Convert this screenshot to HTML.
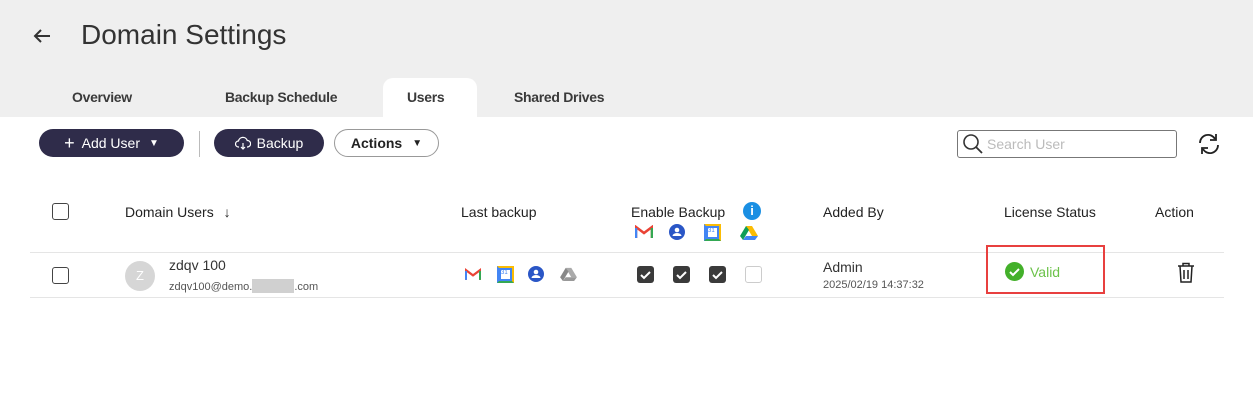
<!DOCTYPE html>
<html><head><style>
*{box-sizing:border-box;margin:0;padding:0}
body{width:1253px;height:420px;background:#fff;font-family:"Liberation Sans",sans-serif;color:#222;position:relative;overflow:hidden}
.abs{position:absolute}
.hdr{left:0;top:0;width:1253px;height:117px;background:#efefef}
.t{font-size:14px;font-weight:bold;color:#3a3a3a;letter-spacing:-0.3px}
.btn{height:28px;border-radius:14px;display:flex;align-items:center;justify-content:center;font-size:14px}
.dark{background:#2f2c4a;color:#fff}
.cb{width:17px;height:17px;border:1.5px solid #444;border-radius:3px}
.ck{width:17px;height:17px;border-radius:3px;background:#3a3a3a}
.line{height:1px;background:#e5e5e5;left:30px;width:1194px}
.hd{font-size:14px;color:#222}
.pers{border-radius:50%;background:#2a56c6;overflow:hidden}
</style></head><body>
<div class="abs hdr"></div>
<svg class="abs" style="left:33px;top:28px" width="18" height="16" viewBox="0 0 18 16"><path d="M17 8H2M8 2L2 8l6 6" fill="none" stroke="#333" stroke-width="2"/></svg>
<div class="abs" style="left:81px;top:19px;font-size:28px;color:#333">Domain Settings</div>
<div class="abs t" style="left:72px;top:89px">Overview</div>
<div class="abs t" style="left:225px;top:89px">Backup Schedule</div>
<div class="abs" style="left:383px;top:78px;width:94px;height:40px;background:#fff;border-radius:10px 10px 0 0"></div>
<div class="abs t" style="left:407px;top:89px">Users</div>
<div class="abs t" style="left:514px;top:89px">Shared Drives</div>

<div class="abs btn dark" style="left:39px;top:129px;width:145px"><span style="font-size:18px;margin-right:7px">+</span>Add User<span style="font-size:10px;margin-left:9px">▼</span></div>
<div class="abs" style="left:199px;top:131px;width:1px;height:26px;background:#bbb"></div>
<div class="abs btn dark" style="left:214px;top:129px;width:110px"><svg width="16" height="14" viewBox="0 0 16 14" style="margin-right:6px"><path d="M4 11H3.5a3 3 0 0 1 0-6 4.5 4.5 0 0 1 8.7-.5A3 3 0 0 1 12.5 11H12M8 7v6M6 11l2 2 2-2" fill="none" stroke="#fff" stroke-width="1.2"/></svg>Backup</div>
<div class="abs btn" style="left:334px;top:129px;width:105px;border:1px solid #999;font-weight:bold;color:#222">Actions<span style="font-size:10px;margin-left:10px">▼</span></div>

<div class="abs" style="left:957px;top:130px;width:220px;height:28px;border:1px solid #777;border-radius:3px"></div>
<svg class="abs" style="left:962px;top:133px" width="22" height="22" viewBox="0 0 22 22"><circle cx="9" cy="9" r="7" fill="none" stroke="#333" stroke-width="1.6"/><path d="M14 14l6 6" stroke="#333" stroke-width="1.8"/></svg>
<div class="abs" style="left:987px;top:136px;font-size:14px;color:#bbb">Search User</div>
<svg class="abs" style="left:1195px;top:131px" width="28" height="26" viewBox="0 0 28 26"><path d="M5 12a8 8 0 0 1 15-4M23 14a8 8 0 0 1-15 4" fill="none" stroke="#222" stroke-width="1.8"/><path d="M21 3v6h-6M7 23v-6h6" fill="none" stroke="#222" stroke-width="1.8"/></svg>

<div class="abs cb" style="left:52px;top:203px"></div>
<div class="abs hd" style="left:125px;top:204px">Domain Users <span style="margin-left:6px">&#8595;</span></div>
<div class="abs hd" style="left:461px;top:204px">Last backup</div>
<div class="abs hd" style="left:631px;top:204px">Enable Backup</div>
<div class="abs" style="left:743px;top:202px;width:18px;height:18px;border-radius:50%;background:#1a8fe3;color:#fff;font-size:13px;font-weight:bold;text-align:center;line-height:18px">i</div>
<div class="abs hd" style="left:823px;top:204px">Added By</div>
<div class="abs hd" style="left:1004px;top:204px">License Status</div>
<div class="abs hd" style="left:1155px;top:204px">Action</div>

<svg class="abs" style="left:635px;top:225px" width="18" height="14" viewBox="0 0 18 14"><path d="M1 13V2l8 6 8-6v11" fill="none" stroke="#ea4335" stroke-width="2.5"/><path d="M1 13V3" stroke="#4285f4" stroke-width="2.5"/><path d="M17 13V3" stroke="#34a853" stroke-width="2.5"/></svg>
<svg class="abs" style="left:669px;top:224px" width="16" height="16" viewBox="0 0 16 16"><circle cx="8" cy="8" r="8" fill="#2a56c6"/><circle cx="8" cy="6" r="2.3" fill="#fff"/><path d="M3.5 12a4.5 3 0 0 1 9 0z" fill="#fff"/></svg>
<div class="abs" style="left:704px;top:224px;width:17px;height:17px;background:#4285f4;border:2px solid #fbbc04;border-left-color:#4285f4;border-bottom-color:#34a853"><div style="background:#fff;width:9px;height:9px;margin:2px;font-size:6px;color:#4285f4">31</div></div>
<svg class="abs" style="left:740px;top:225px" width="18" height="15" viewBox="0 0 18 15"><path d="M6 1h6l6 10h-6z" fill="#fbbc04"/><path d="M6 1L0 11l3 4 6-10z" fill="#0f9d58"/><path d="M3 15h12l3-4H6z" fill="#4285f4"/></svg>

<div class="abs line" style="top:252px"></div>
<div class="abs line" style="top:297px"></div>

<div class="abs cb" style="left:52px;top:267px"></div>
<div class="abs" style="left:125px;top:261px;width:30px;height:30px;border-radius:50%;background:#d6d6d6;color:#fff;font-size:13px;text-align:center;line-height:30px">Z</div>
<div class="abs" style="left:169px;top:257px;font-size:14px;color:#333">zdqv 100</div>
<div class="abs" style="left:169px;top:279px;font-size:11px;color:#555">zdqv100@demo.<span style="display:inline-block;width:42px;height:14px;background:#d0d0d0;vertical-align:-3px"></span>.com</div>

<svg class="abs" style="left:465px;top:268px" width="16" height="13" viewBox="0 0 18 14"><path d="M1 13V2l8 6 8-6v11" fill="none" stroke="#ea4335" stroke-width="2.5"/><path d="M1 13V3" stroke="#4285f4" stroke-width="2.5"/><path d="M17 13V3" stroke="#34a853" stroke-width="2.5"/></svg>
<div class="abs" style="left:497px;top:266px;width:17px;height:17px;background:#4285f4;border:2px solid #fbbc04;border-left-color:#4285f4;border-bottom-color:#34a853"><div style="background:#fff;width:9px;height:9px;margin:2px;font-size:6px;color:#4285f4">31</div></div>
<svg class="abs" style="left:528px;top:266px" width="16" height="16" viewBox="0 0 16 16"><circle cx="8" cy="8" r="8" fill="#2a56c6"/><circle cx="8" cy="6" r="2.3" fill="#fff"/><path d="M3.5 12a4.5 3 0 0 1 9 0z" fill="#fff"/></svg>
<svg class="abs" style="left:560px;top:267px" width="17" height="14" viewBox="0 0 18 15"><path d="M6 1h6l6 10h-6z" fill="#aaa"/><path d="M6 1L0 11l3 4 6-10z" fill="#888"/><path d="M3 15h12l3-4H6z" fill="#999"/></svg>

<div class="abs ck" style="left:637px;top:266px"><svg width="17" height="17"><path d="M4 9l3 3 6-6" fill="none" stroke="#fff" stroke-width="2"/></svg></div>
<div class="abs ck" style="left:673px;top:266px"><svg width="17" height="17"><path d="M4 9l3 3 6-6" fill="none" stroke="#fff" stroke-width="2"/></svg></div>
<div class="abs ck" style="left:709px;top:266px"><svg width="17" height="17"><path d="M4 9l3 3 6-6" fill="none" stroke="#fff" stroke-width="2"/></svg></div>
<div class="abs" style="left:745px;top:266px;width:17px;height:17px;border:1px solid #ccc;border-radius:3px"></div>

<div class="abs" style="left:823px;top:259px;font-size:14px;color:#333">Admin</div>
<div class="abs" style="left:823px;top:279px;font-size:11px;color:#555">2025/02/19 14:37:32</div>

<div class="abs" style="left:986px;top:245px;width:119px;height:49px;border:2px solid #e8403f"></div>
<div class="abs" style="left:1005px;top:262px;width:19px;height:19px;border-radius:50%;background:#43b02a"><svg width="19" height="19"><path d="M5 10l3 3 6-6" fill="none" stroke="#fff" stroke-width="2"/></svg></div>
<div class="abs" style="left:1030px;top:264px;font-size:14px;color:#6cc24a">Valid</div>

<svg class="abs" style="left:1176px;top:262px" width="20" height="22" viewBox="0 0 20 22"><path d="M2 4h16M7 4V1.5h6V4M4 4l1 16h10l1-16M8 8v9M12 8v9" fill="none" stroke="#222" stroke-width="1.5"/></svg>
</body></html>
